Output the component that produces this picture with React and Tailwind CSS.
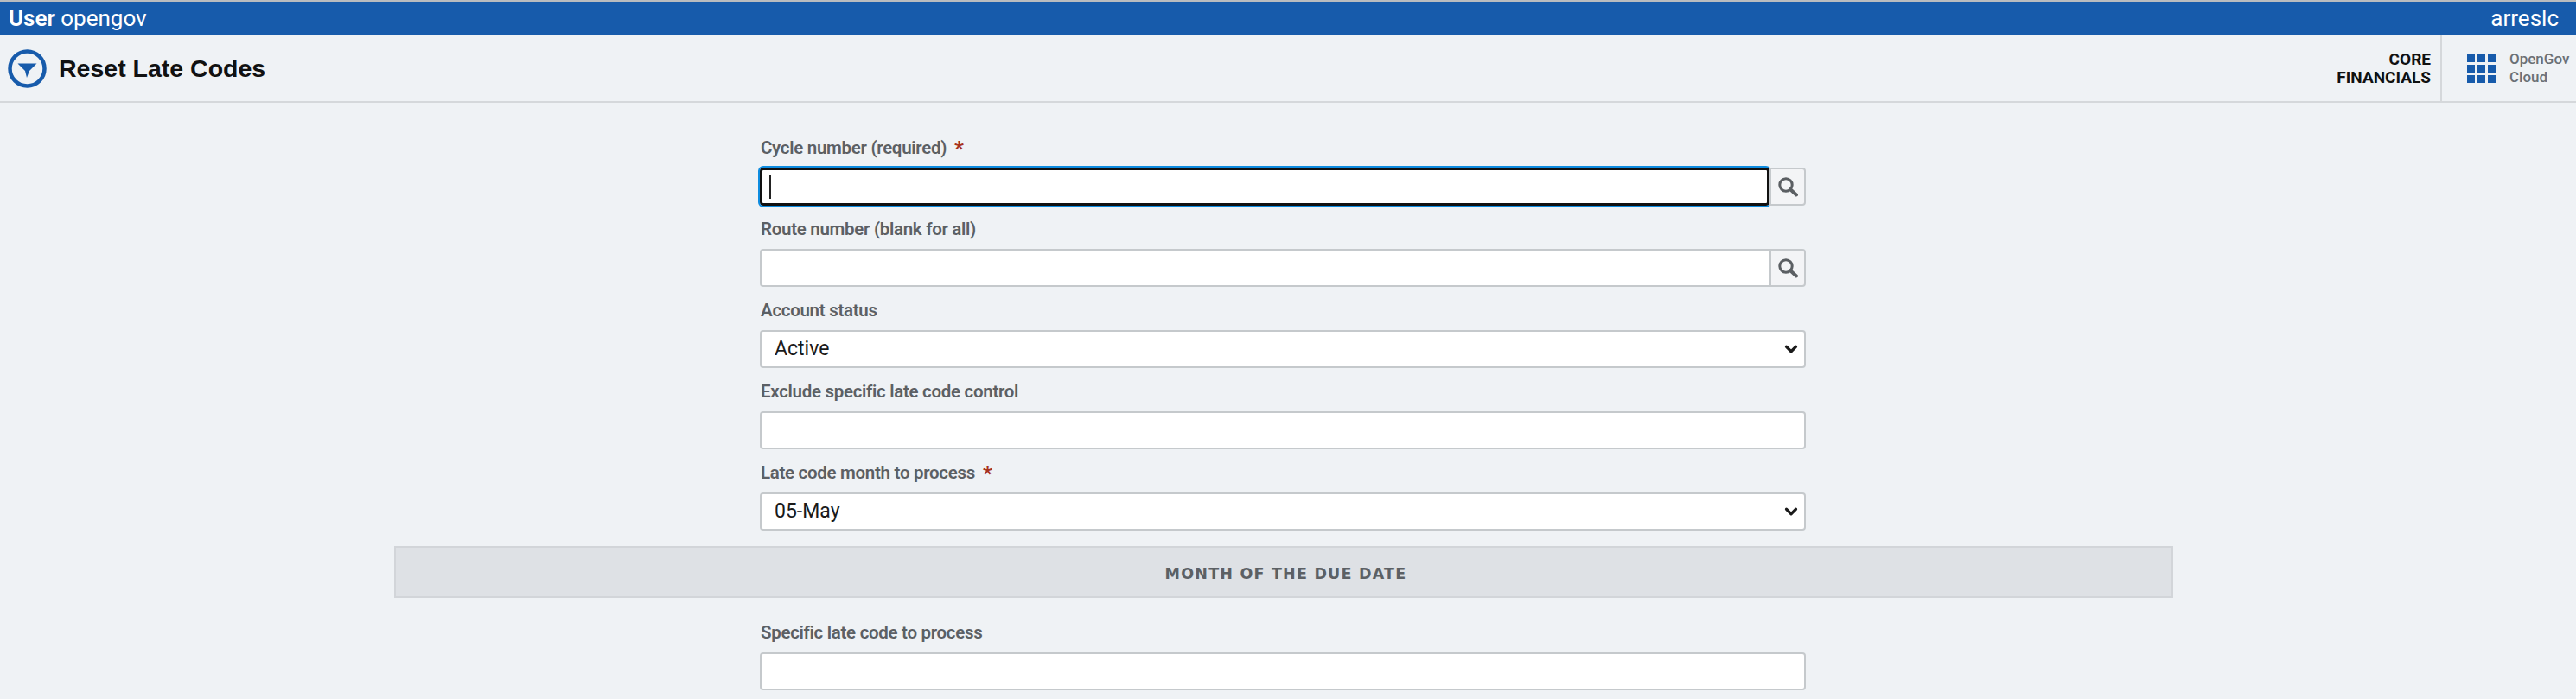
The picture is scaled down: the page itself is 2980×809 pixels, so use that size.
import React from 'react';
import { ChevronDown } from 'lucide-react';

const SearchIcon = () => (
  <svg viewBox="0 0 24 24" className="w-[24px] h-[24px]" fill="none" stroke="#5b5f63" strokeWidth="3">
    <circle cx="10" cy="10" r="7.2" />
    <path d="M15.2 15.2 L22 21.5" strokeWidth="4" strokeLinecap="round" />
  </svg>
);

const Label = ({ children, required }) => (
  <div className="h-[47px] pt-[2px] flex items-center font-['Roboto',sans-serif] font-semibold text-[20.5px] text-[#5c6064] tracking-[-0.3px] pl-[1px]">
    {children}
    {required && <span className="ml-[9px] text-[#a8321e] font-bold text-[24px] leading-none">*</span>}
  </div>
);

const inputBase = 'h-[44px] bg-white border-2 border-[#c5c9cc] rounded-[4px] w-full';

const SearchField = ({ label, required, focused }) => (
  <div className="mb-[3px]">
    <Label required={required}>{label}</Label>
    <div className="flex h-[44px]">
      {focused ? (
        <div className="flex-1 h-[44px] bg-white border-[3px] border-[#111] rounded-[4px] outline outline-2 outline-[#0d8ce0] flex items-center pl-[8px]">
          <div className="w-[2px] h-[28px] bg-[#222]" />
        </div>
      ) : (
        <div className="flex-1 h-[44px] bg-white border-2 border-r-0 border-[#c5c9cc] rounded-l-[4px]" />
      )}
      <div className="w-[42px] h-[44px] flex items-center justify-center bg-[#f3f4f6] border-2 border-[#c5c9cc] rounded-r-[4px]">
        <SearchIcon />
      </div>
    </div>
  </div>
);

const SelectField = ({ label, required, value }) => (
  <div className="mb-[3px]">
    <Label required={required}>{label}</Label>
    <div className={`${inputBase} flex items-center justify-between pl-[15px] pr-[4px] font-['Roboto',sans-serif] text-[23px] text-[#1a1a1a]`}>
      <span>{value}</span>
      <ChevronDown className="w-[22px] h-[22px] text-[#1a1a1a]" strokeWidth={3.5} />
    </div>
  </div>
);

const TextField = ({ label }) => (
  <div className="mb-[3px]">
    <Label>{label}</Label>
    <div className={inputBase} />
  </div>
);

export default function App() {
  return (
    <div className="h-[809px] overflow-hidden bg-[#eff2f5] font-['Roboto',sans-serif]">
      {/* Top bar */}
      <div className="h-[2px] bg-[#b9bcbf]" />
      <div className="h-[39px] bg-[#175bab] flex items-center justify-between pl-[10px] pr-[20px] text-white font-['Roboto',sans-serif]">
        <div className="text-[26px]">
          <span className="font-semibold">User</span> opengov
        </div>
        <div className="text-[26px]">arreslc</div>
      </div>

      {/* Page header */}
      <div className="h-[78px] border-b-2 border-[#d5d8db] flex items-center justify-between pl-[9px]">
        <div className="flex items-center gap-[14px]">
          <svg viewBox="0 0 45 45" className="w-[45px] h-[45px]" fill="none">
            <circle cx="22.5" cy="22.5" r="20" stroke="#175bab" strokeWidth="4.5" />
            <path d="M11.5 16.5 H33.5 L25 25 L22 33 L20 25 Z" fill="#175bab" />
          </svg>
          <h1 className="font-['Liberation_Sans',sans-serif] font-bold text-[28.5px] text-[#111]">Reset Late Codes</h1>
        </div>
        <div className="flex items-stretch h-full">
          <div className="flex flex-col justify-center items-end pr-[11px] font-['Roboto',sans-serif] font-bold text-[19px] leading-[21px] text-[#111]">
            <span>CORE</span>
            <span>FINANCIALS</span>
          </div>
          <div className="w-[157px] border-l-2 border-[#d5d8db] flex items-center pl-[29px] gap-[16px]">
            <div className="grid grid-cols-3 gap-[3px]">
              {Array.from({ length: 9 }).map((_, i) => (
                <div key={i} className="w-[9px] h-[9px] bg-[#175bab]" />
              ))}
            </div>
            <div className="font-['Roboto',sans-serif] font-medium text-[17px] leading-[21px] text-[#6b7075]">
              OpenGov
              <br />
              Cloud
            </div>
          </div>
        </div>
      </div>

      {/* Form */}
      <div className="pt-[28px]">
        <div className="ml-[879px] w-[1210px]">
          <SearchField label="Cycle number (required)" required focused />
          <SearchField label="Route number (blank for all)" />
          <SelectField label="Account status" value="Active" />
          <TextField label="Exclude specific late code control" />
          <SelectField label="Late code month to process" required value="05-May" />
        </div>
        <div className="ml-[456px] w-[2058px] h-[60px] mt-[18px] pt-[4px] pl-[5px] bg-[#dee1e5] border-2 border-[#d2d5d9] flex items-center justify-center font-['DejaVu_Sans',sans-serif] font-bold text-[17.5px] tracking-[1.2px] text-[#5c6064]">
          MONTH OF THE DUE DATE
        </div>
        <div className="ml-[879px] w-[1210px] mt-[16px]">
          <TextField label="Specific late code to process" />
        </div>
      </div>
    </div>
  );
}
